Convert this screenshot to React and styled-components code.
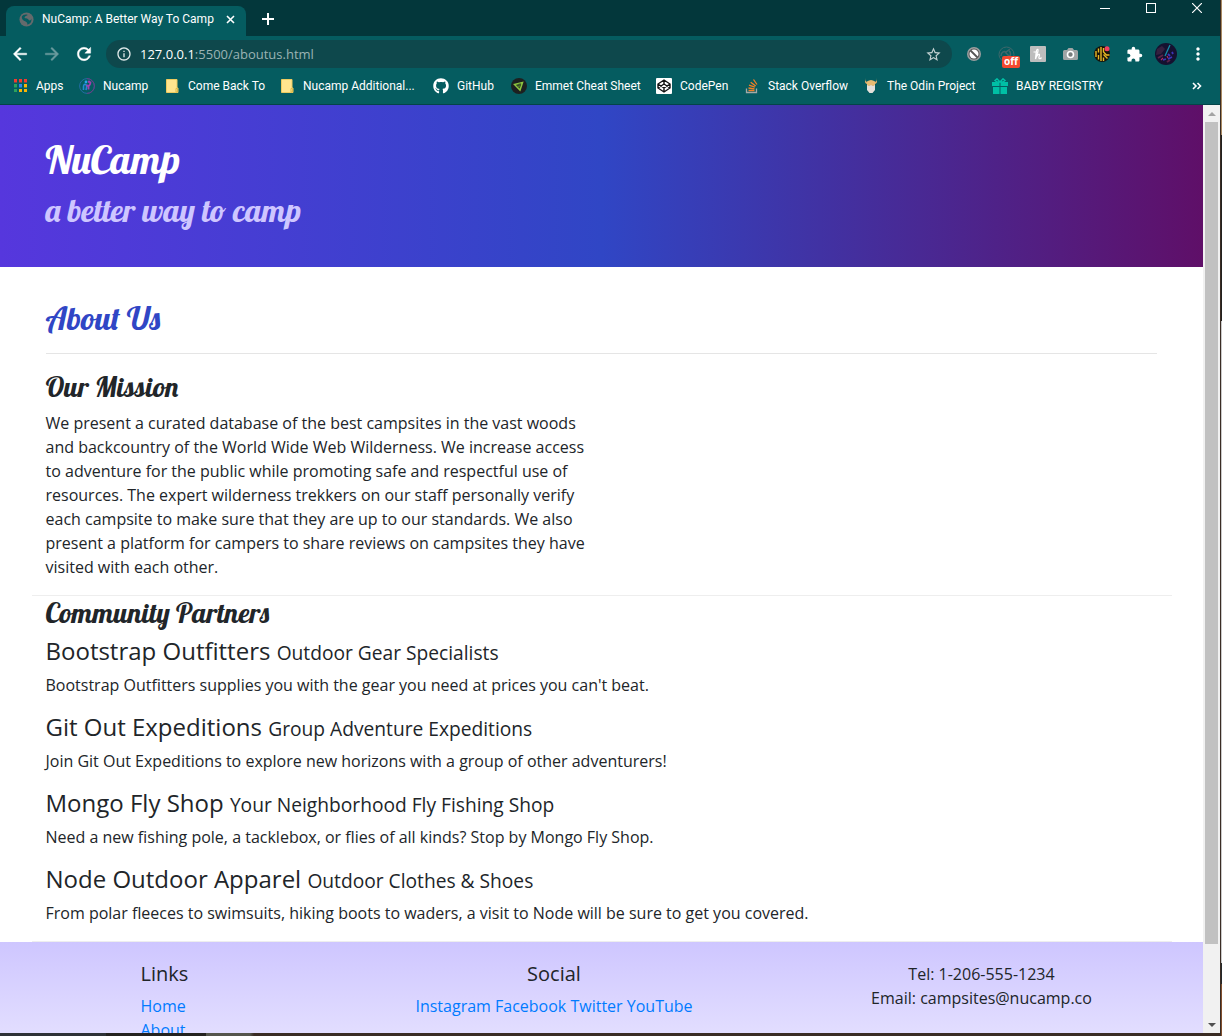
import React from "react";
import styled, { createGlobalStyle } from "styled-components";
import { FaGithub } from "react-icons/fa";
import { MdArrowBack, MdArrowForward, MdRefresh, MdInfoOutline, MdStarBorder, MdMoreVert, MdExtension } from "react-icons/md";

const GlobalStyle = createGlobalStyle`
  * { box-sizing: border-box; }
  html, body, #root { height: 100%; }
  body {
    margin: 0;
    overflow: hidden;
    font-family: "Open Sans", "Noto Sans", sans-serif;
    font-size: 16px;
    line-height: 24px;
    color: #212529;
  }
  h1, h2, h3, h4, h5, p { margin: 0; font-weight: 400; }
  button { border: 0; padding: 0; background: none; color: inherit; font: inherit; }
`;

const display = `"Lobster", "Liberation Serif", serif`;
const chrome = `Roboto, "Open Sans", sans-serif`;

const Desktop = styled.div`
  height: 100%;
  display: flex;
  flex-direction: column;
  background:
    linear-gradient(#a98a63 13%, #23211f 13% 31%, #c9c9c9 31% 93%, #25282a 93% 95%, #80502f 95%) right / 1px 100% no-repeat,
    linear-gradient(90deg, #2e3236 0 106px, #24221f 106px 206px, #55554c 206px 250px, #3a2c24 254px);
  padding: 0 2px 3px 0;
`;
const Browser = styled.div`
  flex: 1;
  min-height: 0;
  display: flex;
  flex-direction: column;
  background: #055c60;
`;
const TitleBar = styled.div`
  display: flex;
  height: 36px;
  padding: 6px 0 0 6px;
  background: #03373b;
`;
const Tab = styled.div`
  display: flex;
  align-items: center;
  width: 240px;
  height: 30px;
  padding: 0 8px 4px 13px;
  gap: 8px;
  border-radius: 8px 8px 0 0;
  background: #055c60;
  color: #fff;
  font: 12px/16px ${chrome};
  white-space: nowrap;
  svg { flex: none; }
  span { flex: 1; }
`;
const TabButton = styled.button`
  display: flex;
  align-items: center;
  justify-content: center;
  color: #fff;
  width: ${(p) => p.$w || 16}px;
  height: 26px;
`;
const WindowControls = styled.div`
  display: flex;
  margin: -6px 0 0 auto;
  height: 16px;
`;
const Control = styled.button`
  display: flex;
  align-items: center;
  justify-content: center;
  width: 46px;
  color: #fff;
`;
const Toolbar = styled.div`
  display: flex;
  align-items: center;
  height: 36px;
  padding: 0 6px 0 10px;
  color: #fff;
`;
const ToolButton = styled.button`
  display: flex;
  align-items: center;
  justify-content: center;
  position: relative;
  width: 32px;
  height: 28px;
  color: ${(p) => p.$color || "#fff"};
`;
const NavButton = styled(ToolButton)`
  width: 20px;
  margin-right: 12px;
  path:last-child { stroke: currentColor; stroke-width: 0.5; }
`;
const AddressBar = styled.div`
  flex: 1;
  display: flex;
  align-items: center;
  gap: 8px;
  height: 28px;
  padding: 0 10px;
  border-radius: 14px;
  background: #0e484c;
  font-size: 13px;
  line-height: 20px;
  color: #9bb3b4;
  margin-right: 6px;
  strong { font-weight: 400; color: #fff; }
  span { flex: 1; }
`;
const OffBadge = styled.span`
  position: absolute;
  left: 12px;
  top: 16px;
  width: 18px;
  height: 12px;
  border-radius: 2px;
  background: #f2492f;
  color: #fff;
  font-size: 10px;
  font-weight: 700;
  line-height: 11px;
  text-align: center;
`;
const Bookmarks = styled.nav`
  display: flex;
  align-items: center;
  height: 33px;
  padding: 0 11px 5px 12px;
  border-bottom: 1px solid #044448;
  font: 12px/16px ${chrome};
  white-space: nowrap;
`;
const Bookmark = styled.a`
  display: flex;
  align-items: center;
  gap: 8px;
  flex: none;
  width: ${(p) => p.$w}px;
  color: #fff;
  text-decoration: none;
`;
const IconBox = styled.span`
  display: flex;
  align-items: center;
  justify-content: center;
  flex: none;
  width: 16px;
  height: 16px;
`;
const More = styled.button`
  margin-left: auto;
  width: 24px;
  display: flex;
  justify-content: center;
`;
const Viewport = styled.div`
  flex: 1;
  min-height: 0;
  display: flex;
  background: #fff;
`;
const Page = styled.div`
  flex: 1;
  min-width: 0;
  overflow: hidden;
`;
const ScrollBar = styled.div`
  width: 17px;
  display: flex;
  flex-direction: column;
  align-items: center;
  background: #f1f1f1;
`;
const ScrollArrow = styled.button`
  display: flex;
  align-items: center;
  justify-content: center;
  width: 17px;
  height: 17px;
`;
const ScrollTrack = styled.div`
  flex: 1;
  width: 13px;
`;
const Thumb = styled.div`
  height: 92%;
  background: #c1c1c1;
`;
const Jumbotron = styled.header`
  padding: 30px 0 34px;
  background: linear-gradient(90deg, #5637dd, #3046c5 50%, #5f0f68);
`;
const Container = styled.div`
  max-width: 1140px;
  margin: 0 auto;
  padding: 0 15px 0 14px;
`;
const Brand = styled.h1`
  margin-bottom: 8px;
  font: 500 40px/48px ${display};
  color: #fff;
`;
const Tagline = styled.h2`
  margin-bottom: 4px;
  font: 500 32px/38px ${display};
  color: #cec6ff;
`;
const PageTitle = styled.h2`
  padding: 32px 0 15px;
  font: 500 32px/39px ${display};
  color: #3046c5;
  border-bottom: 1px solid #e5e5e5;
`;
const Mission = styled.section`
  padding: 16px 0;
  p { max-width: 541px; }
`;
const SectionTitle = styled.h3`
  margin-bottom: 7px;
  font: 500 28px/34px ${display};
`;
const Partners = styled(Container)`
  border-top: 1px solid #eee;
  border-bottom: 1px solid #eee;
`;
const Partner = styled.article`
  padding-bottom: 16px;
  h4 { font-size: 24px; line-height: 28px; margin-bottom: 8px; }
  small { font-size: 80%; line-height: 1; }
`;
const Footer = styled.footer`
  background: linear-gradient(#cec6ff, #fff 220px);
`;
const FooterRow = styled.div`
  display: grid;
  grid-template-columns: 3fr 5fr 4fr;
  max-width: 1140px;
  margin: 0 auto;
  padding: 20px 0 48px;
`;
const FooterColumn = styled.div`
  padding-left: ${(p) => p.$indent || 0}px;
  text-align: ${(p) => p.$align || "left"};
  h5 { font-size: 20px; line-height: 24px; margin-bottom: 8px; }
  ul { list-style: none; margin: 0; padding: 0; }
`;
const PageLink = styled.a`
  color: #007bff;
  text-decoration: none;
`;

const Globe = () => (
  <svg width="15" height="15" viewBox="0 0 16 16">
    <circle cx="8" cy="8" r="7.5" fill="#656a6c" />
    <path d="M3 5c1-2 4-3 6-2 1 1-3 1-3 3 0 1 3 0 4 2s3 1 3-1c1 3-1 6-4 6.500 0-2-1-3-2-3.500S3 9 3 5z" fill="#055c60" />
  </svg>
);
const CloseIcon = () => (
  <svg width="9" height="9" viewBox="0 0 9 9">
    <path d="M1 1l7 7M8 1L1 8" stroke="#fff" strokeWidth="1.600" />
  </svg>
);
const PlusIcon = () => (
  <svg width="12" height="12" viewBox="0 0 12 12">
    <path d="M0 6h12M6 0v12" stroke="#fff" strokeWidth="2" />
  </svg>
);
const AppsIcon = () => (
  <svg width="13" height="14" viewBox="0 0 13 14">
    {["#f33b2f", "#f33b2f", "#f33b2f", "#2ba25c", "#2b87f0", "#f9b507", "#2ba25c", "#f9b507", "#f9b507"].map((c, i) => (
      <g key={i}>
        <rect x={(i % 3) * 5} y={Math.floor(i / 3) * 5} width="3" height="3" fill={c} />
        {i < 6 && <rect x={(i % 3) * 5} y={Math.floor(i / 3) * 5 + 3} width="3" height="1" fill={c} opacity=".45" />}
      </g>
    ))}
  </svg>
);
const NucampIcon = () => (
  <svg width="16" height="16" viewBox="0 0 16 16" fill="none">
    <circle cx="8" cy="8" r="7.400" stroke="#246ca4" />
    <path d="M8 .6a7.400 7.400 0 0 1 0 14.800" stroke="#713a80" />
    <path d="M4.500 12V9q0-3 2-2.500T7 12" stroke="#2389d5" strokeWidth="1.600" />
    <path d="M7.500 7l2 1.500v3M9.500 8q2-1 2-4.500" stroke="#a03fb0" strokeWidth="1.800" />
    <circle cx="7" cy="4" r="1.400" fill="#24a5e9" />
    <circle cx="10" cy="3.800" r="1.200" fill="#a03fb0" />
  </svg>
);
const Folder = () => (
  <svg width="13" height="14" viewBox="0 0 13 14">
    <path d="M.5.500H11V9h1v4.500H.5z" fill="#ffe58e" stroke="#edcb60" />
    <path d="M10 13V9.500h1.500V13z" fill="#ffe58e" stroke="#dcb94b" />
  </svg>
);
const EmmetIcon = () => (
  <svg width="16" height="16" viewBox="0 0 16 16">
    <circle cx="8" cy="8" r="8" fill="#1d2020" />
    <path d="M3.500 6.500L11.500 4.500 9 12z" fill="none" stroke="#8dc63f" strokeWidth="1.500" />
    <path d="M6.500 6.500l1.500 3 1.500-4z" fill="#1d2020" stroke="#5c8a2c" strokeWidth=".8" />
  </svg>
);
const CodePenIcon = () => (
  <svg width="16" height="16" viewBox="0 0 16 16">
    <rect width="16" height="16" rx="1" fill="#fff" />
    <path d="M8 2l6 4v4l-6 4-6-4V6zM8 2v4M8 10v4M2 6l6 4 6-4M2 10l6-4 6 4" fill="none" stroke="#111" strokeWidth="1.400" />
  </svg>
);
const StackIcon = () => (
  <svg width="16" height="16" viewBox="0 0 16 16" fill="none" strokeWidth="1.300">
    <path d="M2.500 10.500v4h10v-4" stroke="#a4a9a7" />
    <path d="M4.500 12.500h6M4.500 10l6 .8M5 7.200l5.800 2M6.700 4.200l5 3.800M9.500 1.500l3.500 5" stroke="#f48024" />
  </svg>
);
const OdinIcon = () => (
  <svg width="12" height="16" viewBox="0 0 12 16">
    <path d="M0 0c0 3 1 4 3 4h6c2 0 3-1 3-4 .5 4 0 5-2 6v3H2V6C0 5-.5 4 0 0z" fill="#dcae6c" />
    <path d="M2 3.500q4-3 8 0V7H2z" fill="#e8bb72" />
    <path d="M2 7l2 1 2-1 2 1 2-1v5l-2.500 3h-3L2 12z" fill="#e4e0da" />
  </svg>
);
const GiftIcon = () => (
  <svg width="16" height="16" viewBox="0 0 16 16" fill="#00bfa5">
    <path d="M0 4h7.500v4H0zM8.500 4H16v4H8.500zM1 9h6.500v7H1zM8.500 9H15v7H8.500z" />
    <path d="M8 4L5 .8 3 2.500 5 4zM8 4l3-3.200 2 1.700L11 4z" fill="none" stroke="#00bfa5" strokeWidth="1.400" />
  </svg>
);
const Blocker = () => (
  <svg width="14" height="14" viewBox="0 0 14 14">
    <circle cx="7" cy="7" r="7" fill="#9a9e9f" />
    <circle cx="7" cy="7" r="5.500" fill="#555" />
    <circle cx="7" cy="7" r="4.500" fill="#fff" />
    <path d="M3.500 3.500l7 7" stroke="#555" strokeWidth="1.800" />
  </svg>
);
const DarkCircle = () => (
  <svg width="17" height="17" viewBox="0 0 17 17" fill="none" stroke="#3e686b">
    <circle cx="8.500" cy="8.500" r="7.500" />
    <path d="M3 10c0-4 3-5 5-4l4-3M7 6l4 4c2 0 2-4 0-5" strokeWidth="1.500" />
  </svg>
);
const Honey = () => (
  <svg width="16" height="16" viewBox="0 0 16 16">
    <rect width="16" height="16" rx="1" fill="#bdbdbd" />
    <path d="M5.500 13C6 9 9 6 8 3.500 6.500 2 6 7 5.500 13c1-4 4-6 4-4l-.7 3q1 1.500 2.700-.5M3.500 6h5" fill="none" stroke="#fff" strokeWidth="1.200" />
  </svg>
);
const Camera = () => (
  <svg width="15" height="14" viewBox="0 0 15 14">
    <path d="M1.500 3H4l1.500-2h4L11 3h2.500q1.500 0 1.500 1.500v7q0 1.500-1.500 1.500h-12Q0 13 0 11.500v-7Q0 3 1.500 3z" fill="#a0a4a5" />
    <circle cx="7.500" cy="7.500" r="3" fill="#777c7d" stroke="#fff" strokeWidth="1.600" />
  </svg>
);
const Maze = () => (
  <svg width="16" height="16" viewBox="0 0 16 16">
    <circle cx="8" cy="8" r="8" fill="#17130a" />
    <path d="M2 5v6M4.500 2.500v4M4.500 9v4.500M7 1v14M9.500 2v4l3 3h3M9.500 8.500l4 4M9.500 11.500V15" fill="none" stroke="#e9b924" strokeWidth="1.400" />
    <circle cx="13" cy="2.800" r="2.500" fill="#f43f5f" />
  </svg>
);
const Avatar = () => (
  <svg width="22" height="22" viewBox="0 0 22 22">
    <circle cx="11" cy="11" r="11" fill="#151130" />
    <path d="M2 6l5-3 3 3-4 5-5 1z" fill="#35203f" />
    <path d="M10 13L15 2" stroke="#158ba8" strokeWidth="1.300" />
    <path d="M3 15l5-3M12 19l3-2" stroke="#5b2348" strokeWidth="2" />
    <path d="M13 11l2 2M17 9l1 2M13 16l4-2M8 17l3-1" stroke="#3c35b8" strokeWidth="1.800" />
    <path d="M6 17l2-2M12 13l1 2" stroke="#b12a61" strokeWidth="1.200" />
  </svg>
);
const Chevrons = () => (
  <svg width="10" height="8" viewBox="0 0 10 8">
    <path d="M1 1l3 3-3 3M5.500 1l3 3-3 3" fill="none" stroke="#fff" strokeWidth="1.600" />
  </svg>
);

const bookmarks = [
  { label: "Apps", icon: <AppsIcon />, w: 67 },
  { label: "Nucamp", icon: <NucampIcon />, w: 85 },
  { label: "Come Back To", icon: <Folder />, w: 115 },
  { label: "Nucamp Additional...", icon: <Folder />, w: 154 },
  { label: "GitHub", icon: <FaGithub size={16} />, w: 78 },
  { label: "Emmet Cheat Sheet", icon: <EmmetIcon />, w: 145 },
  { label: "CodePen", icon: <CodePenIcon />, w: 88 },
  { label: "Stack Overflow", icon: <StackIcon />, w: 119 },
  { label: "The Odin Project", icon: <OdinIcon />, w: 129 },
  { label: "BABY REGISTRY", icon: <GiftIcon />, w: 120 },
];

const partners = [
  ["Bootstrap Outfitters", "Outdoor Gear Specialists", "Bootstrap Outfitters supplies you with the gear you need at prices you can't beat."],
  ["Git Out Expeditions", "Group Adventure Expeditions", "Join Git Out Expeditions to explore new horizons with a group of other adventurers!"],
  ["Mongo Fly Shop", "Your Neighborhood Fly Fishing Shop", "Need a new fishing pole, a tacklebox, or flies of all kinds? Stop by Mongo Fly Shop."],
  ["Node Outdoor Apparel", "Outdoor Clothes & Shoes", "From polar fleeces to swimsuits, hiking boots to waders, a visit to Node will be sure to get you covered."],
];

export default function App() {
  return (
    <Desktop>
      <GlobalStyle />
      <Browser>
        <TitleBar>
          <Tab>
            <Globe />
            <span>NuCamp: A Better Way To Camp</span>
            <TabButton aria-label="Close tab"><CloseIcon /></TabButton>
          </Tab>
          <TabButton $w={44} aria-label="New tab"><PlusIcon /></TabButton>
          <WindowControls>
            <Control aria-label="Minimize"><svg width="10" height="10"><path d="M0 5.500h10" stroke="#fff" /></svg></Control>
            <Control aria-label="Maximize"><svg width="10" height="10"><rect x=".5" y=".5" width="9" height="9" fill="none" stroke="#fff" /></svg></Control>
            <Control aria-label="Close"><svg width="10" height="10"><path d="M0 0l10 10M10 0L0 10" stroke="#fff" strokeWidth="1.200" /></svg></Control>
          </WindowControls>
        </TitleBar>
        <Toolbar>
          <NavButton aria-label="Back"><MdArrowBack size={20} /></NavButton>
          <NavButton aria-label="Forward" $color="#6b9b9e"><MdArrowForward size={20} /></NavButton>
          <NavButton aria-label="Reload"><MdRefresh size={20} /></NavButton>
          <AddressBar>
            <MdInfoOutline size={16} color="#dfe9e9" />
            <span><strong>127.0.0.1</strong>:5500/aboutus.html</span>
            <MdStarBorder size={17} color="#c3d1d2" />
          </AddressBar>
          <ToolButton aria-label="Blocker"><Blocker /></ToolButton>
          <ToolButton aria-label="Extension off"><DarkCircle /><OffBadge>off</OffBadge></ToolButton>
          <ToolButton aria-label="Honey"><Honey /></ToolButton>
          <ToolButton aria-label="Screenshot"><Camera /></ToolButton>
          <ToolButton aria-label="Maze"><Maze /></ToolButton>
          <ToolButton aria-label="Extensions"><MdExtension size={17} /></ToolButton>
          <ToolButton aria-label="Profile"><Avatar /></ToolButton>
          <ToolButton aria-label="Menu"><MdMoreVert size={20} /></ToolButton>
        </Toolbar>
        <Bookmarks>
          {bookmarks.map((b) => (
            <Bookmark key={b.label} href="#" $w={b.w}><IconBox>{b.icon}</IconBox>{b.label}</Bookmark>
          ))}
          <More aria-label="More bookmarks"><Chevrons /></More>
        </Bookmarks>
        <Viewport>
          <Page>
            <Jumbotron>
              <Container>
                <Brand>NuCamp</Brand>
                <Tagline>a better way to camp</Tagline>
              </Container>
            </Jumbotron>
            <Container>
              <PageTitle>About Us</PageTitle>
              <Mission>
                <SectionTitle>Our Mission</SectionTitle>
                <p>
                  We present a curated database of the best campsites in the vast woods and backcountry of the
                  World Wide Web Wilderness. We increase access to adventure for the public while promoting safe
                  and respectful use of resources. The expert wilderness trekkers on our staff personally verify
                  each campsite to make sure that they are up to our standards. We also present a platform for
                  campers to share reviews on campsites they have visited with each other.
                </p>
              </Mission>
            </Container>
            <Partners as="section">
              <SectionTitle>Community Partners</SectionTitle>
              {partners.map(([name, kind, text]) => (
                <Partner key={name}>
                  <h4>{name} <small>{kind}</small></h4>
                  <p>{text}</p>
                </Partner>
              ))}
            </Partners>
            <Footer>
              <FooterRow>
                <FooterColumn $indent={109}>
                  <h5>Links</h5>
                  <ul>
                    <li><PageLink href="#">Home</PageLink></li>
                    <li><PageLink href="#">About</PageLink></li>
                  </ul>
                </FooterColumn>
                <FooterColumn $align="center">
                  <h5>Social</h5>
                  <PageLink href="#">Instagram</PageLink> <PageLink href="#">Facebook</PageLink>{" "}
                  <PageLink href="#">Twitter</PageLink> <PageLink href="#">YouTube</PageLink>
                </FooterColumn>
                <FooterColumn $align="center">
                  <div>Tel: 1-206-555-1234</div>
                  <div>Email: campsites@nucamp.co</div>
                </FooterColumn>
              </FooterRow>
            </Footer>
          </Page>
          <ScrollBar>
            <ScrollArrow aria-label="Scroll up"><svg width="8" height="4"><path d="M0 4l4-4 4 4z" fill="#a3a3a3" /></svg></ScrollArrow>
            <ScrollTrack><Thumb /></ScrollTrack>
            <ScrollArrow aria-label="Scroll down"><svg width="8" height="4"><path d="M0 0l4 4 4-4z" fill="#505050" /></svg></ScrollArrow>
          </ScrollBar>
        </Viewport>
      </Browser>
    </Desktop>
  );
}
